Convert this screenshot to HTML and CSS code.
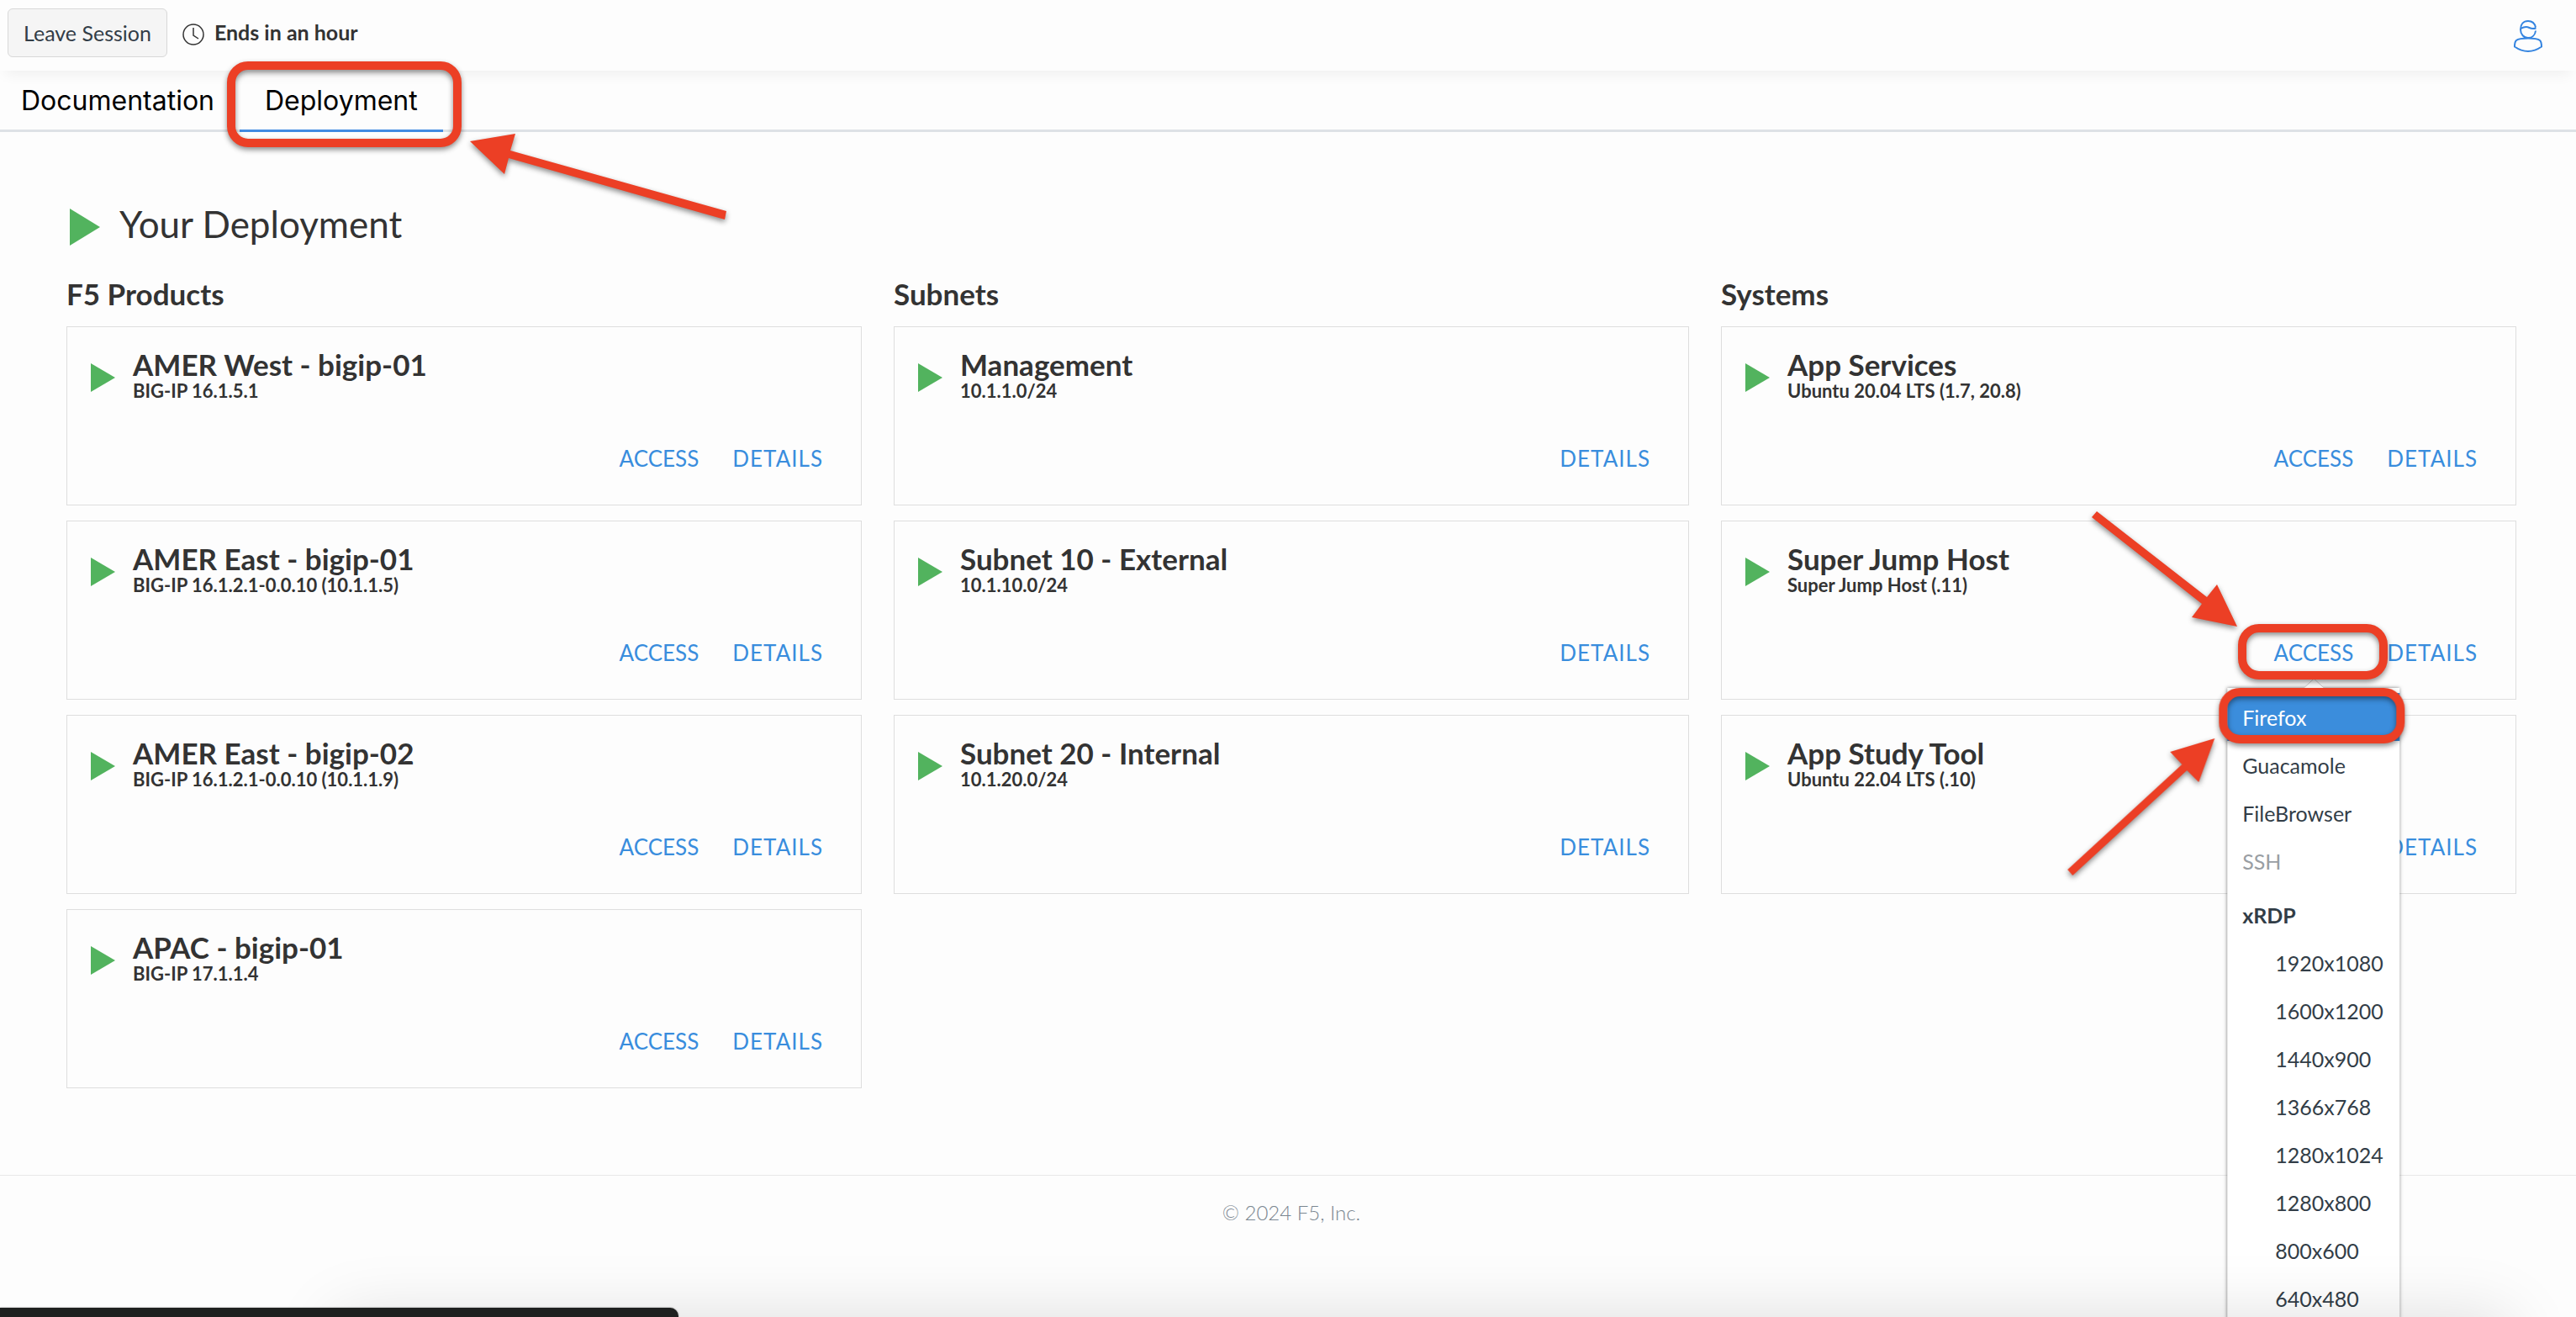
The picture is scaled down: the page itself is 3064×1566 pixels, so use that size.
FILE: index.html
```html
<!DOCTYPE html>
<html lang="en">
<head>
<meta charset="utf-8">
<title>Your Deployment</title>
<link rel="stylesheet" href="styles.css">
</head>
<body>
<div class="page">
  <header class="topbar">
    <button class="leave" type="button">Leave Session</button>
    <svg class="clock" viewBox="0 0 26 26" aria-hidden="true"><circle cx="13" cy="13" r="12"/><path d="M13 5v9l6 4"/></svg>
    <strong class="ends">Ends in an hour</strong>
    <button class="user" type="button" aria-label="Account">
      <svg viewBox="0 0 34 38" aria-hidden="true"><path d="M26 8.500C25 4 21.500 1 17 1C11.500 1 8 5 8 11C8 17 12 21 17 21C22 21 25.500 17.500 26 12.500M8.500 10C11 8.500 15.500 7.500 18.500 9C21 10.200 23.500 10.300 26.500 9.500M17 21.500C10 21.500 5.500 22 3 24C1.300 25.500 1 28 1 31.500C6 35 11 37 17 37C23 37 28 35 33 31.500C33 28 32.700 25.500 31 24C28.500 22 24 21.500 17 21.500Z"/></svg>
    </button>
  </header>

  <nav class="tabs">
    <button class="tab" type="button">Documentation</button>
    <button class="tab active" type="button">Deployment
      <span class="ring ring-tab"><svg class="arrow arrow-tab" viewBox="0 0 320 120"><path d="M6 18L60 9L54 29L311 101L309 111L52 38L47 57Z"/></svg></span>
    </button>
  </nav>

  <main class="content">
    <h1 class="title"><svg class="play-large" viewBox="0 0 36 44" aria-hidden="true"><path d="M0 0L36 22L0 44Z"/></svg>Your Deployment</h1>
    <div class="columns">
      <section class="column">
        <h2 class="heading">F5 Products</h2>
        <article class="card">
          <div class="summary"><svg class="play" viewBox="0 0 29 34" aria-hidden="true"><path d="M0 0L29 17L0 34Z"/></svg><div><h3 class="name">AMER West - bigip-01</h3><p class="info">BIG-IP 16.1.5.1</p></div></div>
          <div class="actions"><button class="action" type="button">ACCESS</button><button class="action details" type="button">DETAILS</button></div>
        </article>
        <article class="card">
          <div class="summary"><svg class="play" viewBox="0 0 29 34" aria-hidden="true"><path d="M0 0L29 17L0 34Z"/></svg><div><h3 class="name">AMER East - bigip-01</h3><p class="info">BIG-IP 16.1.2.1-0.0.10 (10.1.1.5)</p></div></div>
          <div class="actions"><button class="action" type="button">ACCESS</button><button class="action details" type="button">DETAILS</button></div>
        </article>
        <article class="card">
          <div class="summary"><svg class="play" viewBox="0 0 29 34" aria-hidden="true"><path d="M0 0L29 17L0 34Z"/></svg><div><h3 class="name">AMER East - bigip-02</h3><p class="info">BIG-IP 16.1.2.1-0.0.10 (10.1.1.9)</p></div></div>
          <div class="actions"><button class="action" type="button">ACCESS</button><button class="action details" type="button">DETAILS</button></div>
        </article>
        <article class="card">
          <div class="summary"><svg class="play" viewBox="0 0 29 34" aria-hidden="true"><path d="M0 0L29 17L0 34Z"/></svg><div><h3 class="name">APAC - bigip-01</h3><p class="info">BIG-IP 17.1.1.4</p></div></div>
          <div class="actions"><button class="action" type="button">ACCESS</button><button class="action details" type="button">DETAILS</button></div>
        </article>
      </section>

      <section class="column">
        <h2 class="heading">Subnets</h2>
        <article class="card">
          <div class="summary"><svg class="play" viewBox="0 0 29 34" aria-hidden="true"><path d="M0 0L29 17L0 34Z"/></svg><div><h3 class="name">Management</h3><p class="info">10.1.1.0/24</p></div></div>
          <div class="actions"><button class="action details" type="button">DETAILS</button></div>
        </article>
        <article class="card">
          <div class="summary"><svg class="play" viewBox="0 0 29 34" aria-hidden="true"><path d="M0 0L29 17L0 34Z"/></svg><div><h3 class="name">Subnet 10 - External</h3><p class="info">10.1.10.0/24</p></div></div>
          <div class="actions"><button class="action details" type="button">DETAILS</button></div>
        </article>
        <article class="card">
          <div class="summary"><svg class="play" viewBox="0 0 29 34" aria-hidden="true"><path d="M0 0L29 17L0 34Z"/></svg><div><h3 class="name">Subnet 20 - Internal</h3><p class="info">10.1.20.0/24</p></div></div>
          <div class="actions"><button class="action details" type="button">DETAILS</button></div>
        </article>
      </section>

      <section class="column">
        <h2 class="heading">Systems</h2>
        <article class="card">
          <div class="summary"><svg class="play" viewBox="0 0 29 34" aria-hidden="true"><path d="M0 0L29 17L0 34Z"/></svg><div><h3 class="name">App Services</h3><p class="info">Ubuntu 20.04 LTS (1.7, 20.8)</p></div></div>
          <div class="actions"><button class="action" type="button">ACCESS</button><button class="action details" type="button">DETAILS</button></div>
        </article>
        <article class="card">
          <div class="summary"><svg class="play" viewBox="0 0 29 34" aria-hidden="true"><path d="M0 0L29 17L0 34Z"/></svg><div><h3 class="name">Super Jump Host</h3><p class="info">Super Jump Host (.11)</p></div></div>
          <div class="actions">
            <div class="dropdown">
              <button class="action" type="button" aria-expanded="true">ACCESS</button>
              <div class="menu">
                <svg class="caret" viewBox="0 0 26 14" aria-hidden="true"><path d="M0 13L13 1L26 13"/></svg>
                <ul class="options">
                  <li class="option selected"><button class="choice" type="button">Firefox</button>
                    <span class="ring ring-option"><svg class="arrow arrow-option" viewBox="0 0 190 175"><path d="M184 5L131 21L145 36L9 161L15 168L151 43L165 57Z"/></svg></span>
                  </li>
                  <li class="option"><button class="choice" type="button">Guacamole</button></li>
                  <li class="option"><button class="choice" type="button">FileBrowser</button></li>
                  <li class="option"><button class="choice" type="button" disabled>SSH</button></li>
                </ul>
                <h4 class="group">xRDP</h4>
                <ul class="sizes">
                  <li><button class="choice" type="button">1920x1080</button></li>
                  <li><button class="choice" type="button">1600x1200</button></li>
                  <li><button class="choice" type="button">1440x900</button></li>
                  <li><button class="choice" type="button">1366x768</button></li>
                  <li><button class="choice" type="button">1280x1024</button></li>
                  <li><button class="choice" type="button">1280x800</button></li>
                  <li><button class="choice" type="button">800x600</button></li>
                  <li><button class="choice" type="button">640x480</button></li>
                </ul>
              </div>
              <span class="ring ring-access"><svg class="arrow arrow-access" viewBox="0 0 185 150"><path d="M180 145L156 95L144 110L13 8L7 15L138 118L126 134Z"/></svg></span>
            </div>
            <button class="action details" type="button">DETAILS</button>
          </div>
        </article>
        <article class="card">
          <div class="summary"><svg class="play" viewBox="0 0 29 34" aria-hidden="true"><path d="M0 0L29 17L0 34Z"/></svg><div><h3 class="name">App Study Tool</h3><p class="info">Ubuntu 22.04 LTS (.10)</p></div></div>
          <div class="actions"><button class="action" type="button">ACCESS</button><button class="action details" type="button">DETAILS</button></div>
        </article>
      </section>
    </div>
  </main>

  <footer class="footer">© 2024 F5, Inc.</footer>
  <div class="dock-shadow"></div>
  <div class="dock"></div>
</div>
</body>
</html>
```
FILE: styles.css
```css
* { box-sizing: border-box; }
body {
  margin: 0;
  background: #fdfdfd;
  color: #333;
  font-family: Lato, "Liberation Sans", sans-serif;
  font-size: 25px;
  line-height: 30px;
}
h1, h2, h3, h4, p, ul { margin: 0; padding: 0; }
ul { list-style: none; }
button {
  margin: 0;
  padding: 0;
  border: 0;
  background: none;
  color: inherit;
  font: inherit;
}
svg { display: block; }
.page { position: relative; min-height: 100vh; overflow: hidden; }

.topbar {
  display: flex;
  align-items: flex-start;
  height: 84px;
  padding: 10px 40px 0 9px;
  box-shadow: 0 10px 16px -6px rgba(0, 0, 0, 0.06);
}
.leave {
  height: 58px;
  padding: 0 18px;
  border: 1px solid #d8d8d8;
  border-radius: 6px;
  background: #f5f5f5;
  color: #323d47;
}
.clock {
  width: 26px;
  height: 26px;
  margin: 18px 12px 0 18px;
  fill: none;
  stroke: #333;
  stroke-width: 1.5;
}
.ends { margin-top: 13px; }
.user { margin: 14px 0 0 auto; }
.user svg {
  width: 34px;
  height: 38px;
  fill: none;
  stroke: #3484e0;
  stroke-width: 2;
}

.tabs { display: flex; border-bottom: 3px solid #dee2e6; }
.tab {
  position: relative;
  height: 73px;
  margin-bottom: -3px;
  padding: 2px 30px 0;
  border-bottom: 3px solid transparent;
  color: #000;
  font-family: Inter, "Liberation Sans", sans-serif;
  font-size: 32px;
}
.tab:first-child { padding-left: 25px; }
.tab.active { border-bottom-color: #428be2; }

.content { padding: 81px 71px 103px 79px; }
.title {
  display: flex;
  align-items: center;
  gap: 23px;
  margin-bottom: 36px;
  padding-left: 4px;
  font-size: 44px;
  font-weight: 400;
  line-height: 56px;
}
.play-large { width: 36px; height: 44px; margin-top: 8px; }
.play { flex: none; width: 29px; height: 34px; margin-top: 16px; }
.play, .play-large { fill: #52b35e; }

.columns { display: grid; grid-template-columns: repeat(3, 1fr); gap: 38px; align-items: start; }
.column { display: flex; flex-direction: column; gap: 18px; }
.heading { margin-bottom: 2px; font-size: 35px; line-height: 38px; }
.card { padding: 27px 45px 40px 28px; border: 1px solid #dedede; }
.summary { display: flex; gap: 21px; margin-bottom: 52px; }
.name { margin-bottom: 2px; font-size: 35px; line-height: 34px; }
.info { font-size: 22px; font-weight: 700; line-height: 26px; }
.actions { display: flex; justify-content: flex-end; gap: 40px; }
.action { color: #398ddd; font-size: 26px; }
.details { letter-spacing: 1px; }

.dropdown { position: relative; display: flex; }
.menu {
  position: absolute;
  z-index: 2;
  top: 57px;
  left: 50%;
  width: max-content;
  padding: 6px 0;
  background: #fff;
  box-shadow: 0 0 4px rgba(0, 0, 0, 0.5);
  color: #323d47;
  transform: translateX(-50%);
}
.caret {
  position: absolute;
  bottom: 100%;
  left: 50%;
  width: 26px;
  height: 14px;
  margin: 0 0 -2px -13px;
  fill: #fff;
  stroke: #ccc;
}
.option { position: relative; }
.choice { width: 100%; height: 57px; padding: 0 20px 0 18px; text-align: left; }
.choice:disabled { color: #999ea3; }
.selected { background: #3b8ddc; color: #fff; }
.group { padding: 8px 18px 0; font-size: 25px; line-height: 56px; }
.sizes .choice { padding-left: 57px; }

.ring {
  position: absolute;
  z-index: 3;
  border: 10px solid #ec3f25;
  border-radius: 25px;
  filter: drop-shadow(0 3px 3px rgba(0, 0, 0, 0.45));
  pointer-events: none;
}
.ring-tab { inset: -11px -22px -21px -15px; }
.ring-access { inset: -19px -41px -17px -43px; }
.ring-option { inset: -6px -6px -3px -10px; }
.arrow { position: absolute; fill: #ec3f25; }
.arrow-tab { top: 67px; left: 273px; width: 320px; height: 120px; }
.arrow-access { top: -152px; left: -191px; width: 185px; height: 150px; }
.arrow-option { top: 45px; left: -199px; width: 190px; height: 175px; }

.footer {
  padding: 29px 0 40px 8px;
  border-top: 1px solid #e8e8e8;
  color: #7a8690;
  font-size: 24px;
  font-weight: 300;
  text-align: center;
}
.dock-shadow {
  position: absolute;
  z-index: 4;
  top: 100%;
  right: 80px;
  left: 400px;
  height: 100px;
  box-shadow: 0 0 80px rgba(0, 0, 0, 0.13);
}
.dock {
  position: absolute;
  z-index: 5;
  bottom: 0;
  left: 0;
  width: 807px;
  height: 11px;
  border-top-right-radius: 10px;
  background: #1e201f;
  box-shadow: 0 0 2px rgba(0, 0, 0, 0.5);
}
```
